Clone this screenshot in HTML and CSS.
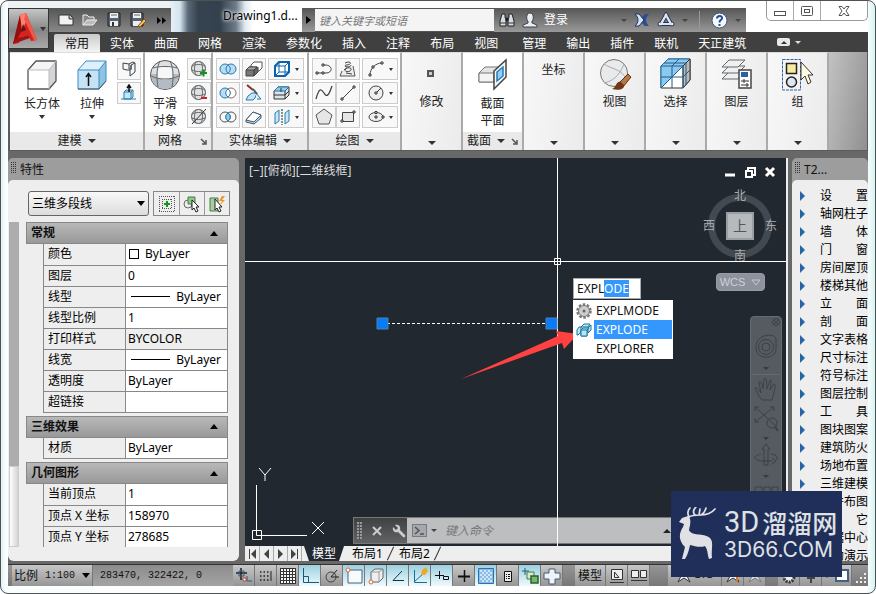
FILE: index.html
```
<!DOCTYPE html>
<html lang="zh-CN">
<head>
<meta charset="utf-8">
<title>Drawing1.dwg</title>
<link rel="stylesheet" href="styles.css">
</head>
<body>
<div class="window">
  <header class="header">
    <button class="app-button" aria-label="应用程序菜单">
      <svg width="26" height="34" viewBox="0 0 26 34"><path d="M8 3 14 1 25 28 19 29 16 23 9 25 7 31 1 32Z" fill="#d9211d"/><path d="M8 3 10 18 4 29 1 32Z" fill="#8f1010"/><path d="M8 3 14 1 15 8 10 18Z" fill="#ff8173"/><path d="M11 12 14 18 9 20Z" fill="#5b1715"/><path d="M14 1 25 28 22 28 12 7Z" fill="#f05a4d"/><path d="M3 27 16 23 18 26 1 32Z" fill="#a31313"/></svg>
      <i class="tri"></i>
    </button>
    <div class="titlebar">
      <div class="quick">
        <button aria-label="新建"><svg width="18" height="16" viewBox="0 0 18 16"><path d="M2 3H13L16 6V13H2Z" fill="#f2f2f2" stroke="#333"/><path d="M12 3V7H16" fill="#aaa" stroke="#444"/></svg></button>
        <button aria-label="打开"><svg width="18" height="16" viewBox="0 0 18 16"><path d="M2 13V3H6L8 5H13V8" fill="#888" stroke="#eee"/><path d="M2 13 6 8H16L12 13Z" fill="#bbb" stroke="#eee"/></svg></button>
        <button aria-label="保存"><svg width="18" height="16" viewBox="0 0 18 16"><path d="M3 1H15V14H3Z" fill="#576273" stroke="#222"/><path d="M5 1H13V6H5Z" fill="#eee"/><path d="M6 3H12" stroke="#666"/><path d="M5 9H13V14H5Z" fill="#eee"/><path d="M7 10H9V14H7Z" fill="#333"/></svg></button>
        <button aria-label="另存为"><svg width="18" height="16" viewBox="0 0 18 16"><path d="M2 1H14V14H2Z" fill="#576273" stroke="#222"/><path d="M4 1H12V6H4ZM4 9H12V14H4Z" fill="#eee"/><path d="M5 3H11" stroke="#666"/><path d="M9 14 15 7 17 9 11 15Z" fill="#ffc64a" stroke="#8b4c17"/></svg></button>
        <button class="more" aria-label="更多"><svg width="9" height="7" viewBox="0 0 9 7"><path d="M0 0 4 3.500 0 7ZM5 0 9 3.500 5 7Z"/></svg></button>
      </div>
      <h1 class="doc-title">Drawing1.d...</h1>
      <button class="search-toggle" aria-label="展开"><svg width="5" height="8" viewBox="0 0 5 8"><path d="M0 0 5 4 0 8Z"/></svg></button>
      <input class="search" type="search" aria-label="搜索" placeholder="键入关键字或短语">
      <div class="info">
        <button aria-label="查找"><svg width="16" height="16" viewBox="0 0 16 16"><path d="M3 2H6V5L7 8V14H1V9ZM10 2H13L15 9V14H9V8L10 5Z" fill="#d6dce5" stroke="#222"/><path d="M7 6H9V9H7ZM1 11H7M9 11H15" stroke="#333"/></svg></button>
        <button class="login"><svg width="16" height="16" viewBox="0 0 16 16"><path d="M8 1C4 1 4 8 6 9V11L1 13V15H15V13L10 11V9C12 8 12 1 8 1Z" fill="#e8edf3" stroke="#39424d"/></svg>登录</button>
        <i class="tri dim push"></i>
        <button aria-label="交换"><svg width="16" height="14" viewBox="0 0 16 14"><path d="M1 1H5L8 4 11 1H15C11 5 11 9 15 13H11L8 10 5 13H1C5 9 5 5 1 1Z" fill="#2d4d91"/><path d="M1 1H5L10 7 5 13H1C5 9 5 5 1 1Z" fill="#d7e3f4" stroke="#20355e"/></svg></button>
        <button aria-label="网络"><svg width="18" height="16" viewBox="0 0 18 16"><path d="M9 3 4 12H14Z" fill="none" stroke="#26334d" stroke-width="4"/><path d="M9 3 4 12H14Z" fill="none" stroke="#dce5f5" stroke-width="2"/><g fill="#eef3fb" stroke="#26334d"><circle cx="9" cy="3" r="2"/><circle cx="3" cy="12" r="2"/><circle cx="15" cy="12" r="2"/></g><path d="M9 3 4 12H14Z" fill="none" stroke="#dce5f5" stroke-width="2"/></svg></button>
        <i class="tri dim"></i><i class="rule"></i>
        <button aria-label="帮助"><svg width="17" height="17" viewBox="0 0 17 17"><circle cx="8.500" cy="8.500" r="7.500" fill="#f5f8fd" stroke="#3c5478"/><path d="M6 6.500C6 3 11.500 3 11 6.500C10.500 8 8.500 8 8.500 10.500M8.500 12V14" fill="none" stroke="#264c96" stroke-width="2"/></svg></button>
        <i class="tri dim"></i>
      </div>
      <div class="window-buttons">
        <button aria-label="最小化"><svg width="14" height="12" viewBox="0 0 14 12"><rect x="1.500" y="6.500" width="11" height="4" fill="#fff" stroke="#555"/></svg></button>
        <button aria-label="还原"><svg width="14" height="12" viewBox="0 0 14 12"><rect x="1.500" y="1.500" width="11" height="9" rx="1" fill="#fff" stroke="#555"/><rect x="4.500" y="4.500" width="5" height="3" fill="#fff" stroke="#555"/></svg></button>
        <button class="close" aria-label="关闭"><svg width="14" height="12" viewBox="0 0 14 12"><path d="M2 1.500H5L7 4 9 1.500H12L9 6 12 10.500H9L7 8 5 10.500H2L5 6Z" fill="#fff" stroke="#555"/></svg></button>
      </div>
    </div>
    <nav class="tabs">
      <a class="active" href="#">常用</a><a href="#">实体</a><a href="#">曲面</a><a href="#">网格</a><a href="#">渲染</a><a href="#">参数化</a><a href="#">插入</a><a href="#">注释</a><a href="#">布局</a><a href="#">视图</a><a class="wide" href="#">管理</a><a href="#">输出</a><a href="#">插件</a><a href="#">联机</a><a href="#">天正建筑</a>
      <button class="ribbon-toggle" aria-label="最小化功能区"><span><i></i></span><b></b></button>
    </nav>
  </header>

  <section class="ribbon">
    <div class="panel modeling">
      <div class="tools">
        <button class="big"><svg width="34" height="34" viewBox="0 0 34 34"><path d="M3 12 11 3H31L24 12Z" fill="#f5f5f6"/><path d="M3 12H24V31H3Z" fill="#fff"/><path d="M24 12 31 3V23L24 31Z" fill="#d2d4d7"/><path d="M3 12 11 3H31V23L24 31H3Z" fill="none" stroke="#555" stroke-width="1.300" stroke-linejoin="round"/><path d="M3 12H24V31M24 12 31 3" fill="none" stroke="#bbb"/></svg>长方体<i class="tri"></i></button>
        <button class="big"><svg width="34" height="34" viewBox="0 0 34 34"><path d="M3 12 11 3H31L24 12Z" fill="#ddf0fb"/><path d="M3 12H24V31H3Z" fill="#c5e3f4"/><path d="M24 12 31 3V23L24 31Z" fill="#8fc3e3"/><path d="M3 12 11 3H31V23L24 31H3ZM3 12H24V31M24 12 31 3" fill="none" stroke="#3b8dc0"/><path d="M3 31H24L31 23" fill="none" stroke="#555"/><path d="M13.500 28V16M11 19 13.500 15.500 16 19" fill="none" stroke="#111" stroke-width="1.500"/></svg>拉伸<i class="tri"></i></button>
        <div class="stack">
          <button aria-label="多段体"><svg width="18" height="18" viewBox="0 0 18 18"><path d="M3 3 9 4V9H11V5L15 3V12L10 16V10H7L3 9Z" fill="#f4f6f8" stroke="#3d4249"/><path d="M9 4 13 2 15 3M11 5V10" fill="none" stroke="#3d4249"/></svg></button>
          <button aria-label="按住并拖动"><svg width="18" height="18" viewBox="0 0 18 18"><path d="M4 8 6 6H13V13L11 15H4Z" fill="#c7e6f7" stroke="#287eae"/><path d="M1 15H16M11 8V15M4 8H11L13 6" fill="none" stroke="#287eae"/><path d="M9 8V2M7 4 9 1 11 4" fill="none" stroke="#111" stroke-width="1.500"/></svg></button>
        </div>
      </div>
      <button class="caption">建模 <i class="tri"></i></button>
    </div>
    <div class="panel mesh">
      <div class="tools">
        <button class="big"><svg width="34" height="34" viewBox="0 0 34 34"><circle cx="17" cy="17" r="14.500" fill="#dde1e6" stroke="#555"/><path d="M3 16H31C30 27 23 31 17 31 9 31 3 25 3 16Z" fill="#b4bbc4"/><path d="M11 9H23L25 20 17 22 9 20Z" fill="#f7f7f7"/><path d="M12 3C9 9 8 17 10 29M22 3C25 9 26 17 24 29M5 10C11 8 23 8 29 10M3 18C11 22 23 22 31 18" fill="none" stroke="#666"/></svg>平滑<br>对象</button>
        <div class="stack">
          <button aria-label="提高平滑度"><svg width="18" height="18" viewBox="0 0 18 18"><use href="#sphere"/><path d="M10 13H17M13.500 9.500V16.500" stroke="#14931b" stroke-width="2"/></svg></button>
          <button aria-label="降低平滑度"><svg width="18" height="18" viewBox="0 0 18 18"><use href="#sphere"/><path d="M11 14H17" stroke="#d21e26" stroke-width="2"/></svg></button>
          <button aria-label="锐化"><svg width="18" height="18" viewBox="0 0 18 18"><use href="#sphere"/><path d="M2 16 16 1" stroke="#333"/></svg></button>
        </div>
      </div>
      <div class="caption">网格<svg class="launch" width="7" height="7" viewBox="0 0 7 7"><path d="M1 1 5 5M6 2V6H2" fill="none" stroke="#555" stroke-width="1.500"/></svg></div>
    </div>
    <div class="panel solids">
      <div class="tools">
        <div class="stack">
          <button aria-label="并集"><svg width="18" height="18" viewBox="0 0 18 18"><use href="#rings" fill="#b9ddf4" stroke="#2479ae"/></svg></button>
          <button aria-label="差集"><svg width="18" height="18" viewBox="0 0 18 18"><circle cx="12" cy="9" r="5" fill="#fff" stroke="#9a6c5a"/><circle cx="6" cy="9" r="5" fill="#b9ddf4" stroke="#2479ae"/><path d="M9 5C6 7 6 11 9 13C12 11 12 7 9 5Z" fill="#fff" stroke="#2479ae"/></svg></button>
          <button aria-label="交集"><svg width="18" height="18" viewBox="0 0 18 18"><use href="#rings" fill="none" stroke="#555"/><path d="M9 5C6 7 6 11 9 13C12 11 12 7 9 5Z" fill="#8dc8ed" stroke="#2479ae"/></svg></button>
        </div>
        <div class="stack">
          <button aria-label="干涉"><svg width="18" height="18" viewBox="0 0 18 18"><path d="M6 5 9 2H17V8L14 11H6Z" fill="#fff" stroke="#555"/><path d="M1 10 4 7H12L9 10V16H1Z" fill="#777" stroke="#444"/><path d="M1 10H9L12 7H4Z" fill="#aaa" stroke="#444"/><path d="M9 16 13 12V7L9 10Z" fill="#666" stroke="#444"/></svg></button>
          <button aria-label="剖切"><svg width="18" height="18" viewBox="0 0 18 18"><path d="M3 12 7 9H12L10 14 8 16H1Z" fill="#c5e4f6" stroke="#2479ae"/><path d="M10 8 16 15H12" fill="#e0eff8" stroke="#2479ae"/><path d="M2 1 8 6" stroke="#8c3129" stroke-width="2"/><path d="M8 5 12 10" stroke="#555" stroke-width="2"/></svg></button>
          <button aria-label="加厚"><svg width="18" height="18" viewBox="0 0 18 18"><path d="M1 12 8 4 16 7V10L9 16 1 14Z" fill="#b9ddf4" stroke="#456"/><path d="M1 12 9 14 16 7 8 4Z" fill="#fff" stroke="#456"/></svg></button>
        </div>
        <div class="stack split">
          <button aria-label="提取边"><svg width="18" height="18" viewBox="0 0 18 18"><path d="M2 6 6 2H16V12L12 16H2Z" fill="#fff" stroke="#0862ad" stroke-width="2"/><path d="M2 6H12V16M12 6 16 2M6 2V12H16M6 12 2 16" fill="none" stroke="#0862ad"/></svg><i class="tri"></i></button>
          <button aria-label="拉伸面"><svg width="18" height="18" viewBox="0 0 18 18"><path d="M1 7 5 3H16V11L12 15H1Z" fill="#d9e4eb" stroke="#333"/><path d="M1 7 5 3H16L12 7Z" fill="#93cdec" stroke="#2479ae"/><path d="M12 7V15M1 11H12L16 7M8 8V4" fill="none" stroke="#333"/></svg><i class="tri"></i></button>
          <button aria-label="分割"><svg width="18" height="18" viewBox="0 0 18 18"><path d="M2 5 6 2V13L2 16ZM12 5 16 2V13L12 16Z" fill="#c7e7f8" stroke="#287eae"/><path d="M9 1V17" stroke="#222" stroke-dasharray="2 1"/></svg><i class="tri"></i></button>
        </div>
      </div>
      <button class="caption">实体编辑 <i class="tri"></i></button>
    </div>
    <div class="panel draw">
      <div class="tools">
        <div class="pairs">
          <button aria-label="多段线"><svg width="18" height="18" viewBox="0 0 18 18"><path d="M3 13H11C18 13 18 5 10 5H8" fill="none" stroke="#444"/><g fill="#fff" stroke="#333"><path d="M1 12H3V14H1ZM7 12H9V14H7ZM7 4H9V6H7Z"/></g></svg></button>
          <button aria-label="螺旋"><svg width="18" height="18" viewBox="0 0 18 18"><path d="M3 11 1 16H16L14 6" fill="#eee" stroke="#555"/><path d="M6 3C12 0 14 5 7 5 3 7 12 8 12 5M5 10C8 6 15 8 11 11 7 13 4 10 8 8M7 13 13 14" fill="none" stroke="#444"/></svg></button>
          <button aria-label="样条曲线"><svg width="18" height="18" viewBox="0 0 18 18"><path d="M1 15C4 4 6 4 9 9S14 11 17 2" fill="none" stroke="#444" stroke-width="1.300"/></svg></button>
          <button aria-label="直线"><svg width="18" height="18" viewBox="0 0 18 18"><path d="M3 15 15 3" stroke="#444"/><path d="M2 14H4V16H2ZM14 2H16V4H14Z" fill="#fff" stroke="#333"/></svg></button>
          <button aria-label="多边形"><svg width="18" height="18" viewBox="0 0 18 18"><path d="M9 1 17 7 14 16H4L1 7Z" fill="#e6e6e6" stroke="#555"/></svg></button>
          <button aria-label="矩形"><svg width="18" height="18" viewBox="0 0 18 18"><path d="M3.500 4.500H14.500V13.500H3.500Z" fill="#e6e6e6" stroke="#444"/><path d="M2 12H4V14H2ZM14 3H16V5H14Z" fill="#fff" stroke="#333"/></svg></button>
        </div>
        <div class="stack split">
          <button aria-label="圆弧"><svg width="18" height="18" viewBox="0 0 18 18"><path d="M3 15C3 9 8 3 15 3" fill="none" stroke="#444"/><path d="M2 14H4V16H2ZM5 6H7V8H5ZM14 2H16V4H14Z" fill="#fff" stroke="#333"/></svg><i class="tri"></i></button>
          <button aria-label="圆"><svg width="18" height="18" viewBox="0 0 18 18"><circle cx="9" cy="9" r="7" fill="#eee" stroke="#444"/><path d="M9 9 14 4" stroke="#333"/><path d="M8 8H10V10H8Z" fill="#fff" stroke="#333"/></svg><i class="tri"></i></button>
          <button aria-label="椭圆"><svg width="18" height="18" viewBox="0 0 18 18"><ellipse cx="9" cy="9" rx="7" ry="4.500" fill="#eee" stroke="#444"/><path d="M7 9H11M9 7V11M15 8H17V10H15ZM8 3.500H10V5.500H8Z" fill="#fff" stroke="#333"/></svg><i class="tri"></i></button>
        </div>
      </div>
      <button class="caption">绘图 <i class="tri"></i></button>
    </div>
    <button class="panel folded"><svg width="34" height="34" viewBox="0 0 34 34"><path d="M13 14H18V19H13Z" fill="#ccc" stroke="#555" stroke-width="2"/></svg>修改<i class="tri"></i></button>
    <div class="panel section">
      <div class="tools">
        <button class="big"><svg width="34" height="34" viewBox="0 0 34 34"><path d="M3 15 9 9H23V19L18 24H3Z" fill="#e2e4e6" stroke="#777"/><path d="M3 15H18V24H3Z" fill="#f4f4f4" stroke="#777"/><path d="M18 13 30 2V19L18 31Z" fill="#f5f7f8" stroke="#444" stroke-width="1.500"/><path d="M21 14 27 9V18L21 23Z" fill="#96cef5" stroke="#247abb" stroke-width="1.500"/></svg>截面<br>平面</button>
      </div>
      <div class="caption">截面 <i class="tri"></i><svg class="launch" width="7" height="7" viewBox="0 0 7 7"><path d="M1 1 5 5M6 2V6H2" fill="none" stroke="#555" stroke-width="1.500"/></svg></div>
    </div>
    <button class="panel folded plain">坐标<i class="tri"></i></button>
    <button class="panel folded"><svg width="34" height="34" viewBox="0 0 34 34"><circle cx="16" cy="16" r="13.500" fill="#e9eaec" stroke="#777"/><path d="M6 7C13 12 24 12 28 22M26 7C21 20 14 24 6 26" fill="none" stroke="#aaa"/><path d="M20 27 30 17 33 20 25 30Z" fill="#b97840" stroke="#5a321b"/><path d="M23 25C18 23 19 30 14 32C21 34 27 32 26 28Z" fill="#713817"/></svg>视图<i class="tri"></i></button>
    <button class="panel folded"><svg width="34" height="34" viewBox="0 0 34 34"><path d="M2 9 9 2H31V23L24 31H2Z" fill="#fff" stroke="#333"/><path d="M2 9 9 2H31L24 9 2 31Z" fill="#8bc9f0" stroke="#1774b5"/><path d="M24 9 31 2V23L24 31Z" fill="#bbb" stroke="#333"/><path d="M2 9H24V31M2 20H24L31 13M13 9V31M13 9 20 2M5 6H27V28" fill="none" stroke="#265b80"/><path d="M2 31 24 9" stroke="#0b64aa"/></svg>选择<i class="tri"></i></button>
    <button class="panel folded"><svg width="34" height="34" viewBox="0 0 34 34"><g fill="#eef0f2" stroke="#666"><path d="M2 22 9 15H25L18 22Z"/><path d="M2 16 9 9H25L18 16Z"/><path d="M2 10 9 3H25L18 10Z"/></g><path d="M19 13H31V31H19Z" fill="#fff" stroke="#444" stroke-width="1.500"/><path d="M21 15H28V20H21Z" fill="#2b62a1"/><path d="M21 24H29M21 28H29M24 22V26M27 26V30" stroke="#333"/></svg>图层<i class="tri"></i></button>
    <button class="panel folded"><svg width="34" height="34" viewBox="0 0 34 34"><path d="M1.500 2.500H19.500V33H1.500Z" fill="none" stroke="#325fa8" stroke-dasharray="3 1"/><path d="M5.500 6.500H15.500V16.500H5.500Z" fill="#f6eb9e" stroke="#222" stroke-width="1.500"/><circle cx="10.500" cy="25" r="5" fill="#dce7ef" stroke="#222" stroke-width="1.500"/><path d="M20 5V23L24 19 27 27 30 25 27 18H32Z" fill="#fffbe0" stroke="#333"/></svg>组<i class="tri"></i></button>
    <div class="ribbon-rest"></div>
  </section>

  <main class="workspace">
    <aside class="palette properties">
      <h2 class="palette-title"><i class="grip"></i>特性</h2>
      <div class="palette-body">
        <div class="picker">
          <label class="combo"><select aria-label="对象类型"><option>三维多段线</option></select></label>
          <div class="pick-tools">
            <button aria-label="切换"><svg width="18" height="18" viewBox="0 0 18 18"><path d="M1.500 1V17M16.500 1V17M1 1.500H17M1 16.500H17M4.500 4V14M13.500 4V14M4 4.500H14M4 13.500H14" fill="none" stroke="#555" stroke-dasharray="1 1"/><path d="M6 9H12M9 6V12" stroke="#16951b" stroke-width="2"/></svg></button>
            <button aria-label="选择对象"><svg width="18" height="18" viewBox="0 0 18 18"><circle cx="5" cy="9" r="4" fill="none" stroke="#666"/><path d="M5 2H12V9H5Z" fill="#92c58c" stroke="#477e43"/><path d="M9 5V15L11 13 13 17 15 16 13 12H16Z" fill="#fff" stroke="#222"/></svg></button>
            <button aria-label="快速选择"><svg width="18" height="18" viewBox="0 0 18 18"><path d="M2 3H10V16H2Z" fill="#a6ce9f" stroke="#477e43"/><path d="M7 4V15L9 13 11 17 13 16 11 12H14Z" fill="#fff" stroke="#222"/><path d="M14 1 11 6H14L12 10 17 5H14L17 1Z" fill="#f29522"/></svg></button>
          </div>
        </div>
        <div class="prop-area">
          <div class="prop-scroll"><i></i></div>
          <div class="prop-groups">
            <section><button class="group">常规<i></i></button>
              <table>
                <tr><th>颜色</th><td><i class="swatch"></i>ByLayer</td></tr>
                <tr><th>图层</th><td>0</td></tr>
                <tr><th>线型</th><td><div class="line-value"><i></i>ByLayer</div></td></tr>
                <tr><th>线型比例</th><td>1</td></tr>
                <tr><th>打印样式</th><td class="locked">BYCOLOR</td></tr>
                <tr><th>线宽</th><td><div class="line-value"><i></i>ByLayer</div></td></tr>
                <tr><th>透明度</th><td>ByLayer</td></tr>
                <tr><th>超链接</th><td></td></tr>
              </table></section>
            <section><button class="group">三维效果<i></i></button>
              <table><tr><th>材质</th><td>ByLayer</td></tr></table></section>
            <section><button class="group">几何图形<i></i></button>
              <table>
                <tr><th>当前顶点</th><td>1</td></tr>
                <tr><th>顶点 X 坐标</th><td>158970</td></tr>
                <tr><th>顶点 Y 坐标</th><td>278685</td></tr>
                <tr><th></th><td></td></tr>
              </table></section>
          </div>
        </div>
      </div>
    </aside>

    <section class="drawing">
      <div class="canvas">
        <div class="view-label">[−][俯视][二维线框]</div>
        <div class="view-buttons">
          <button aria-label="最小化视口"><svg width="12" height="12" viewBox="0 0 12 12"><path d="M1 9H11" stroke="#fff" stroke-width="3"/></svg></button>
          <button aria-label="还原视口"><svg width="12" height="12" viewBox="0 0 12 12"><path d="M4 4V2H11V9H9M2 5H8V11H2Z" fill="none" stroke="#fff" stroke-width="2"/></svg></button>
          <button aria-label="关闭视口"><svg width="12" height="12" viewBox="0 0 12 12"><path d="M2 2 10 10M10 2 2 10" stroke="#fff" stroke-width="3"/></svg></button>
        </div>
        <div class="compass">
          <i class="ring"></i><span class="north">北</span><span class="west">西</span><button>上</button><span class="east">东</span><span class="south">南</span>
        </div>
        <button class="wcs">WCS<svg width="10" height="7" viewBox="0 0 10 7"><path d="M1 1H9L5 6Z" fill="none" stroke="#c2c6ce"/></svg></button>
        <div class="nav-bar">
          <svg width="30" height="185" viewBox="1 0 30 185" fill="none" stroke="#3c4146"><circle cx="26" cy="5" r="3.500"/><path d="M24 3 28 7M28 3 24 7"/><path d="M6 30C6 16 26 16 26 22V32C26 38 20 41 14 40C9 39 6 36 6 30Z"/><circle cx="16" cy="30" r="7.500"/><circle cx="16" cy="30" r="4"/><path d="M13 50H19L16 53Z" fill="#34393e" stroke="none"/><path d="M2 57.500H30" stroke="#656a6f"/><path d="M12 83C8 79 7 74 5 71C6 69 9 73 11 76L9 65C10 63 12 65 13 72L14 62C16 60 17 63 17 72L20 63C22 63 21 67 20 73L24 67C26 67 25 71 24 75L22 83Z"/><path d="M5 90 27 110M24 90 5 105M5 94V90H9M20 90H24V94M5 101V105H9"/><circle cx="22" cy="106" r="5"/><path d="M25 110 28 114" stroke-width="2"/><path d="M13 120H19L16 123Z" fill="#34393e" stroke="none"/><path d="M14 148V132H12L16 127 20 132H18V148ZM11 137C2 139 3 144 15 144H22M22 141 26 144 22 147M21 137C27 138 29 141 26 143"/><path d="M13 158H19L16 161Z" fill="#34393e" stroke="none"/><path d="M5 170H12V176H5ZM14 170H20V176H14ZM22 170H28V176H22Z"/></svg>
        </div>
        <div class="command">
          <div class="command-tools"><i class="command-grip"></i>
            <button aria-label="关闭命令行"><svg width="10" height="10" viewBox="0 0 10 10"><path d="M1 1 9 9M9 1 1 9" stroke="#ccc" stroke-width="2"/></svg></button>
            <button aria-label="自定义"><svg width="14" height="14" viewBox="0 0 14 14"><path d="M1 3 4 6 6 4 3 1C7 0 9 3 8 6L13 11C14 13 12 14 11 13L6 8C3 9 0 7 1 3Z" fill="#ccc"/></svg></button>
          </div>
          <svg class="prompt" width="15" height="13" viewBox="0 0 15 13"><rect x=".5" y=".5" width="14" height="12" fill="#a5a8ac" stroke="#777b80"/><path d="M3 3 7 6.500 3 10M8 10H12" fill="none" stroke="#50555b" stroke-width="1.500"/></svg>
          <i class="tri dim"></i>
          <input type="text" aria-label="命令行" placeholder="键入命令">
          <i class="up"></i>
        </div>
        <svg class="scene" width="544" height="389" viewBox="0 0 544 389">
          <g fill="none" stroke="#fff"><path d="M0 103.500H544M312.500 0V389M309.500 100.500H315.500V106.500H309.500Z"/><path d="M11.500 327V377.500H62M7.500 372.500H16.500V381.500H7.500Z"/><path d="M14 310 20 317 26 310M20 317V323M67 364 79 376M79 364 67 376"/><path d="M142 165.500H301" stroke-dasharray="3 2"/></g>
          <path d="M132 160H143V171H132ZM301 160H312V171H301Z" fill="#087cf7" stroke="#4a82b8"/>
          <path d="M216 221 313 178 311 173 333 176 319 191 317 185Z" fill="#ff4141"/>
        </svg>
        <div class="dynamic">
          <input id="dynamic-input" type="text" aria-label="动态输入" value="EXPLODE" size="7">
          <ul>
            <li><svg width="16" height="16" viewBox="0 0 16 16"><circle cx="8" cy="8" r="6.500" fill="none" stroke="#777" stroke-width="2.500" stroke-dasharray="2.500 1.580"/><circle cx="8" cy="8" r="5.500" fill="#ccc" stroke="#777"/><circle cx="8" cy="8" r="1.500" fill="#666"/></svg><span>EXPLMODE</span></li>
            <li class="chosen"><svg width="16" height="16" viewBox="0 0 16 16"><g fill="#b9e4fa" stroke="#15779e"><path d="M1 8 3 5H5V10L2 13H1ZM12 6 15 3V8L12 11ZM5 5 8 2H14L12 5Z"/><path d="M5 8 7 6H13L11 8V14H5Z"/><path d="M5 8H11V14H5Z"/></g></svg><span>EXPLODE</span></li>
            <li><i></i><span>EXPLORER</span></li>
          </ul>
        </div>
      </div>
      <div class="sheets">
        <div class="sheet-nav">
          <button aria-label="第一张"><svg width="9" height="10" viewBox="0 0 9 10"><path d="M1 0V10H2V0ZM8 0V10L3 5Z"/></svg></button>
          <button aria-label="上一张"><svg width="9" height="10" viewBox="0 0 9 10"><path d="M7 0V10L2 5Z"/></svg></button>
          <button aria-label="下一张"><svg width="9" height="10" viewBox="0 0 9 10"><path d="M2 0V10L7 5Z"/></svg></button>
          <button aria-label="最后一张"><svg width="9" height="10" viewBox="0 0 9 10"><path d="M7 0V10H8V0ZM1 0V10L6 5Z"/></svg></button>
        </div>
        <button class="sheet current">模型</button><button class="sheet">布局1</button><button class="sheet">布局2</button>
      </div>
    </section>

    <aside class="palette side">
      <h2 class="palette-title"><i class="grip"></i>T2...</h2>
      <ul class="palette-body menu">
        <li>设　　置</li><li>轴网柱子</li><li>墙　　体</li><li>门　　窗</li><li>房间屋顶</li><li>楼梯其他</li><li>立　　面</li><li>剖　　面</li><li>文字表格</li><li>尺寸标注</li><li>符号标注</li><li>图层控制</li><li>工　　具</li><li>图块图案</li><li>建筑防火</li><li>场地布置</li><li>三维建模</li><li>文件布图</li><li>其　　它</li><li>数据中心</li><li>帮助演示</li>
      </ul>
    </aside>
  </main>

  <footer class="status">
    <button class="scale">比例 <span>1:100</span><i class="tri"></i></button>
    <output class="coords">283470, 322422, 0</output>
    <div class="toggles">
      <button aria-label="推断约束"><svg width="18" height="18" viewBox="0 0 18 18"><path d="M1 6H12M6 1V13" stroke="#222" stroke-width="1.500"/><path d="M4 4H9V9H4ZM12 9V14H17" fill="none" stroke="#36597e"/><path d="M8 11H11V14H8Z" fill="#fff" stroke="#b3472c"/></svg></button>
      <button aria-label="捕捉"><svg width="18" height="18" viewBox="0 0 18 18"><path d="M3 5H13M3 9H13M3 13H13" stroke="#222" stroke-width="1.500" stroke-dasharray="1.500 2"/><path d="M14 4V14" stroke="#222"/></svg></button>
      <button aria-label="栅格"><svg width="18" height="18" viewBox="0 0 18 18"><path d="M1 1H17V17H1Z" fill="#f8f8f8"/><path d="M1.500 1V17M4.500 1V17M7.500 1V17M10.500 1V17M13.500 1V17M16.500 1V17M1 1.500H17M1 4.500H17M1 7.500H17M1 10.500H17M1 13.500H17M1 16.500H17" stroke="#333"/></svg></button>
      <button class="on" aria-label="正交"><svg width="18" height="18" viewBox="0 0 18 18"><path d="M2.500 1V15.500H18" fill="none" stroke="#175b76"/><path d="M2.500 9.500H7.500V15" fill="none" stroke="#175b76"/></svg></button>
      <button aria-label="极轴"><svg width="18" height="18" viewBox="0 0 18 18"><circle cx="8" cy="10" r="5" fill="none" stroke="#444"/><path d="M14 3 8 10H16" fill="none" stroke="#222"/></svg></button>
      <button class="on" aria-label="对象捕捉"><svg width="18" height="18" viewBox="0 0 18 18"><path d="M3 3H17V16H3Z" fill="#f7fbfd" stroke="#456577"/><circle cx="3" cy="3" r="2" fill="#fff" stroke="#d46b30"/></svg></button>
      <button class="on" aria-label="三维对象捕捉"><svg width="18" height="18" viewBox="0 0 18 18"><path d="M4 5 8 2H16V11L12 15H4Z" fill="#eee" stroke="#666"/><path d="M4 5H12V15M12 5 16 2" fill="none" stroke="#999"/><circle cx="4" cy="15" r="2" fill="#fff" stroke="#d46b30"/></svg></button>
      <button class="on" aria-label="对象追踪"><svg width="18" height="18" viewBox="0 0 18 18"><path d="M13 4 4 13.500H15" fill="none" stroke="#123542"/></svg></button>
      <button class="on" aria-label="动态UCS"><svg width="18" height="18" viewBox="0 0 18 18"><path d="M3.500 3V15.500H16M3 15 13 6" fill="none" stroke="#176b9b"/><path d="M11 3 15 0 17 4 14 8H10Z" fill="#eda828"/></svg></button>
      <button class="on" aria-label="动态输入"><svg width="18" height="18" viewBox="0 0 18 18"><path d="M2 8.500H11M6.500 4V12M10.500 9.500H15.500V12.500H10.500Z" fill="none" stroke="#111"/></svg></button>
      <button aria-label="线宽"><svg width="18" height="18" viewBox="0 0 18 18"><path d="M3 9.500H15" stroke="#111" stroke-width="2"/><path d="M9.500 3V15" stroke="#111" stroke-width="1.500"/></svg></button>
      <button class="on" aria-label="透明度"><svg width="18" height="18" viewBox="0 0 18 18"><path d="M1.500 1.500H16.500V16.500H1.500Z" fill="#8bbce9" stroke="#2a72ae"/><path d="M3 4H15M3 8H15M3 12H15" stroke="#cfe5fa" stroke-width="2" stroke-dasharray="2 2"/><path d="M5 6H15M5 10H15M5 14H15" stroke="#cfe5fa" stroke-width="2" stroke-dasharray="2 2"/></svg></button>
      <button aria-label="快捷特性"><svg width="18" height="18" viewBox="0 0 18 18"><path d="M5.500 4.500H12.500V14.500H5.500Z" fill="#eee" stroke="#111"/><path d="M7 7.500H8M9 7.500H11M7 9.500H8M9 9.500H11M7 11.500H8M9 11.500H11" stroke="#111"/></svg></button>
      <button class="on" aria-label="选择循环"><svg width="18" height="18" viewBox="0 0 18 18"><path d="M1 4H8M4 1V8" stroke="#225d82"/><path d="M6 5H13V12H6Z" fill="#d5ecd2" stroke="#467b43"/><path d="M10 9H17V16H10Z" fill="#76b86f" stroke="#2b6329" stroke-width="1.500"/></svg></button>
      <button aria-label="注释监视器"><svg width="18" height="18" viewBox="0 0 18 18"><path d="M6 2H12V6H17V12H12V17H6V12H1V6H6Z" fill="#edf3fa" stroke="#4a5b70"/></svg></button>
    </div>
    <i class="gap"></i>
    <div class="spaces">
      <button class="model">模型</button>
      <button aria-label="布局"><svg width="18" height="16" viewBox="0 0 18 16"><path d="M3.500 1.500H14.500V11.500H3.500ZM2 14.500H16" fill="#eee" stroke="#333"/><path d="M6.500 4V9.500H11Z" fill="none" stroke="#333"/></svg></button>
      <button aria-label="快速查看"><svg width="18" height="16" viewBox="0 0 18 16"><path d="M1.500 2.500H8.500V9.500H1.500ZM10.500 2.500H16.500V9.500H10.500ZM1 12.500H17" fill="#eee" stroke="#333"/></svg></button>
    </div>
    <i class="gap wide"></i>
    <button class="annotation"><svg width="16" height="18" viewBox="0 0 16 18"><path d="M2 15 8 3 14 15 8 11Z" fill="#eef5ff" stroke="#333"/></svg><span>1:1</span></button>
    <button aria-label="注释可见性"><svg width="16" height="18" viewBox="0 0 16 18"><path d="M2 15 8 3 14 15 8 11Z" fill="#eef5ff" stroke="#333"/><path d="M12 9V15" stroke="#dc7924" stroke-width="2"/></svg></button>
    <button aria-label="自动缩放"><svg width="16" height="18" viewBox="0 0 16 18"><path d="M2 15 8 3 14 15 8 11Z" fill="#ddd" stroke="#777"/></svg></button>
    <i class="gap"></i>
    <button aria-label="工作空间"><svg width="16" height="18" viewBox="0 0 16 18"><circle cx="8" cy="10" r="5" fill="#eee" stroke="#333" stroke-width="3" stroke-dasharray="2 1"/></svg></button>
    <button aria-label="锁定"><svg width="16" height="18" viewBox="0 0 16 18"><path d="M5 3H11V11H5ZM8 11V16" fill="#eee" stroke="#444" stroke-width="2"/></svg></button>
    <button class="menu-button" aria-label="状态栏菜单"><i class="tri"></i></button>
    <button class="full" aria-label="全屏显示"><svg width="16" height="16" viewBox="0 0 16 16"><path d="M2 2H14V13H2Z" fill="#fff" stroke="#456080" stroke-width="2"/></svg></button>
    <svg class="resize" width="14" height="14" viewBox="0 0 14 14"><path d="M10 2H12V4H10ZM6 6H8V8H6ZM10 6H12V8H10ZM2 10H4V12H2ZM6 10H8V12H6ZM10 10H12V12H10Z" fill="#eee"/></svg>
  </footer>
</div>

<div class="brand">
  <svg width="42" height="54" viewBox="0 0 42 54"><path d="M2 15 5 11 11 9C15 12 13 18 12 23C15 30 26 25 33 31C37 35 34 42 35 51L32 52C30 46 31 43 28 39C24 41 17 39 13 38C12 43 11 47 8 52H5L8 40C1 33 2 26 6 20L7 17Z" fill="#dfe1e4"/><path d="M12 10C15 8 19 8 23 8C29 8 34 7 38 2M24 8C28 6 28 4 29 1M18 8C15 5 17 2 19 0M12 10C10 6 11 3 13 1M22 8 23 2" fill="none" stroke="#dfe1e4" stroke-width="1.700" stroke-linecap="round"/></svg>
  <div><div class="brand-name"><b>3D</b>溜溜网</div><div class="brand-site">3D66.COM</div></div>
</div>

<svg class="defs" width="0" height="0" aria-hidden="true"><defs>
  <g id="sphere"><circle cx="8.500" cy="8.500" r="7" fill="#dfe2e5" stroke="#555"/><path d="M6 2C4 6 4 11 6 15M11 2C13 6 13 11 11 15M2 6C6 4 11 4 15 6M2 10C6 12 11 12 15 10" fill="none" stroke="#666"/></g>
  <g id="rings"><circle cx="6" cy="9" r="5"/><circle cx="12" cy="9" r="5"/><path d="M9 5C12 7 12 11 9 13" fill="none"/></g>
</defs></svg>
<script src="main.js"></script>
</body>
</html>
```
FILE: styles.css
```
* { box-sizing: border-box; }
body { margin: 0; background: #fff; color: #111; font: 12px/16px "Noto Sans", "Noto Sans CJK SC", sans-serif; }
button { margin: 0; padding: 0; border: 0; background: none; color: inherit; font: inherit; display: flex; align-items: center; justify-content: center; white-space: nowrap; }
input, select { font: inherit; }
svg { display: block; flex: none; }
ul { margin: 0; padding: 0; list-style: none; }
.tri { flex: none; width: 0; height: 0; border: 3px solid transparent; border-top: 4px solid #333; border-bottom: 0; }
.tri.dim { border-top: 3px solid #444; }
.defs { position: absolute; }

.window { height: 100vh; display: flex; flex-direction: column; padding: 0 7px 7px; border: 1px solid #4d5255; border-radius: 8px; overflow: hidden;
  background: linear-gradient(90deg, #e4f1f5, #fbfefe 5px, #fff 50%, #fff 99%, #d7f3f2); }

.header { display: grid; grid-template-columns: 41px 1fr; grid-template-rows: 31px 20px;
  background: linear-gradient(90deg, #eef3f6 160px, #d3e4ef 172px, #5b6978 180px, #36434f 190px, #33404e 212px, #6e7b88 228px, #dfe9f0 237px, #fff 245px); }
.app-button { grid-area: 1 / 1 / 3 / 2; z-index: 1; height: 41px; margin-top: 7px; gap: 2px; border: 1px solid #333; background: linear-gradient(#c5c5c5, #858585 55%, #aaa); }
.titlebar { grid-area: 1 / 2; display: flex; align-items: flex-end; min-width: 0; }
.quick { width: 122px; height: 24px; display: flex; align-items: center; gap: 6px; padding-left: 8px; background: linear-gradient(#555, #888); }
.quick .more { margin-left: 4px; }
.doc-title { flex: 1; height: 24px; margin: 0; padding-left: 52px; font-size: 12px; line-height: 16px; font-weight: 400; white-space: nowrap; color: #000; text-shadow: 0 0 3px #fff, 0 0 5px #fff; }
.search-toggle { width: 13px; height: 24px; background: linear-gradient(#555, #999); }
.search { width: 179px; height: 24px; padding: 0 4px; border: 1px solid #555; border-width: 1px 0; border-radius: 0; background: #f4f4f4; font-size: 11px; outline: 0; }
.search::placeholder { color: #777; font-style: italic; opacity: 1; }
.info { width: 252px; height: 24px; display: flex; align-items: center; gap: 7px; padding: 0 5px; background: linear-gradient(#565656, #999); color: #fff; }
.login { gap: 6px; }
.push { margin-left: auto; }
.rule { width: 1px; height: 18px; margin: 0 4px; background: #999; }
.window-buttons { align-self: flex-start; display: flex; height: 20px; margin-left: 20px; border: 1px solid #999; border-top: 0; border-radius: 0 0 5px 5px; background: #fff; }
.window-buttons button { width: 27px; border-right: 1px solid #aaa; }
.window-buttons .close { width: 46px; border: 0; }
.tabs { grid-area: 2 / 1 / 3 / 3; display: flex; padding: 0 0 0 46px; background: #404040; }
.tabs a { padding: 4px 10px 0; color: #fff; line-height: 16px; text-decoration: none; white-space: nowrap; }
.tabs .active { margin-top: 2px; padding: 2px 11px 0; background: linear-gradient(#c9c9c9, #f4f4f4); color: #111; border-radius: 2px 2px 0 0; }
.tabs .wide { margin-left: 4px; }
.ribbon-toggle { margin-left: 21px; gap: 5px; }
.ribbon-toggle span { width: 13px; height: 8px; border-radius: 2px; background: #e8e8e8; display: flex; align-items: center; justify-content: center; }
.ribbon-toggle i { border: 3px solid transparent; border-bottom-color: #333; border-top: 0; }
.ribbon-toggle b { border: 3px solid transparent; border-top-color: #ddd; border-bottom: 0; }

.ribbon { flex: none; display: flex; height: 99px; border: solid #5c5c5c; border-width: 0 1px 1px 2px; background: #fff; color: #222; }
.panel { flex: none; display: flex; flex-direction: column; justify-content: flex-start; min-width: 61px; border-right: 2px solid #aaa; border-top: 1px solid #ddd; background: #fff; }
.modeling { width: 135px; }
.mesh { width: 68px; }
.solids { width: 96px; }
.draw { width: 93px; }
.tools { flex: 1; display: flex; justify-content: center; gap: 2px; padding-top: 5px; }
.modeling .tools { justify-content: flex-end; padding-right: 2px; gap: 0; }
.big { flex-direction: column; justify-content: flex-start; width: 50px; line-height: 17px; }
.big svg { margin-bottom: 3px; }
.big .tri { margin-top: 3px; }
.mesh .big { width: 40px; }
.stack { display: flex; flex-direction: column; gap: 2px; }
.stack button, .pairs button { width: 24px; height: 22px; border: 1px solid #ccc; background: #f8f8f9; }
.stack.split button { width: 36px; gap: 4px; }
.split .tri { border-width: 3px 2px 0; }
.pairs { display: grid; grid-template-columns: 24px 24px; grid-auto-rows: 22px; gap: 2px 0; }
.caption { flex: none; display: flex; align-items: center; justify-content: center; gap: 6px; width: 100%; height: 18px; background: #e9e9e9; line-height: 16px; white-space: nowrap; }
.mesh .caption { justify-content: flex-end; padding-right: 4px; gap: 18px; }
.folded { align-items: center; padding-top: 4px; background: linear-gradient(100deg, #f8f8f8, #ebebeb); }
.folded > svg { margin-bottom: 3px; }
.folded > .tri { margin-top: auto; margin-bottom: 5px; border-width: 4px 4px 0; }
.caption .tri { border-width: 4px 4px 0; }
.plain { padding-top: 9px; }
.ribbon-rest { flex: 1; background: linear-gradient(100deg, #c2c2c2, #909090); }

.workspace { flex: 1; min-height: 0; display: flex; padding: 7px 0 3px; background: #686868; }
.palette { display: flex; flex-direction: column; background: #9d9d9d; border-radius: 5px 5px 6px 6px; overflow: hidden; }
.palette-title { flex: none; display: flex; align-items: center; gap: 4px; height: 22px; margin: 0; padding: 2px 0 0 3px; font-size: 12px; font-weight: 400; }
.grip { width: 5px; height: 12px; margin-bottom: 4px; background: repeating-linear-gradient(90deg, transparent 0 1px, #9d9d9d 1px 2px), repeating-linear-gradient(#333 0 1px, transparent 1px 2px); }
.palette-body { flex: 1; min-height: 0; background: #eee; border-radius: 5px 5px 5px 0; overflow: hidden; }
.properties { width: 231px; margin-right: 6px; }
.properties .palette-body { display: flex; flex-direction: column; padding-bottom: 14px; }
.picker { display: flex; align-items: center; gap: 4px; padding: 11px 9px 6px 20px; }
.combo { position: relative; flex: 1; }
.combo select { display: block; width: 100%; height: 25px; padding: 0 3px; border: 1px solid #666; border-radius: 3px; background: linear-gradient(#f8f8f8, #ddd); appearance: none; color: #000; }
.combo::after { content: ""; position: absolute; right: 4px; top: 10px; border: 4px solid transparent; border-top: 5px solid #000; border-bottom: 0; }
.pick-tools { display: flex; border: 1px solid #888; }
.pick-tools button { width: 25px; height: 23px; }
.pick-tools button + button { border-left: 1px solid #999; }
.prop-area { flex: 1; min-height: 0; display: flex; gap: 7px; padding: 0 11px 0 1px; overflow: hidden; }
.prop-scroll { width: 10px; flex: none; background: #adadad; display: flex; flex-direction: column; justify-content: flex-end; }
.prop-scroll i { height: 25%; border: 1px solid #ccc; background: linear-gradient(90deg, #fff, #d3d3d3); }
.prop-groups { flex: 1; }
.prop-groups section { margin-bottom: 3px; }
.group { width: 100%; height: 22px; padding: 0 9px 0 4px; justify-content: space-between; border: 1px solid #888; background: linear-gradient(#b8b8b8, #999); font-weight: 700; }
.group i { border: 4px solid transparent; border-bottom: 5px solid #000; border-top: 0; }
table { width: 185px; margin-left: auto; border-collapse: collapse; table-layout: fixed; color: #000; }
th, td { height: 21px; padding: 0 2px; border: 1px solid #888; background: #fff; font-weight: 400; text-align: left; line-height: 16px; white-space: nowrap; }
tr:first-child th, tr:first-child td { border-top: 0; }
th { width: 82px; padding-left: 4px; background: #eee; }
td.locked { background: #eee; }
.swatch { display: inline-block; width: 10px; height: 10px; margin: 0 6px 0 1px; border: 1px solid #000; vertical-align: -1px; }
.line-value { display: flex; align-items: center; gap: 6px; padding: 0 4px 0 3px; }
.line-value i { flex: 1; height: 1px; background: #000; }

.drawing { flex: 1; min-width: 0; display: flex; flex-direction: column; margin-right: 4px; border-right: 2px solid #eee; }
.canvas { position: relative; flex: 1; min-height: 0; overflow: hidden; background: #212830; color: #ddd; }
.view-label { padding: 5px 4px; }
.view-buttons { position: absolute; top: 8px; right: 10px; display: flex; gap: 8px; }
.scene { position: absolute; left: 0; top: 0; pointer-events: none; }
.compass { position: absolute; top: 30px; right: 9px; width: 74px; height: 76px; display: grid; grid-template: 24px 28px 24px / 23px 28px 23px; place-items: center; color: #a9adb1; }
.compass .ring { position: absolute; left: 5px; top: 6px; width: 64px; height: 64px; border: 7px solid #424950; border-radius: 50%; }
.compass span { z-index: 1; }
.north { grid-area: 1 / 2; place-self: start center; }
.west { grid-area: 2 / 1; place-self: center start; }
.east { grid-area: 2 / 3; place-self: center end; }
.south { grid-area: 3 / 2; place-self: end center; }
.compass button { grid-area: 2 / 2; width: 28px; height: 28px; border: 2px solid #9b9fa2; background: #b6babd; color: #555; font-size: 14px; }
.wcs { position: absolute; top: 115px; right: 21px; width: 49px; height: 18px; gap: 6px; border: 1px solid #969ba5; border-radius: 4px; background: #8d929d; color: #ccd0d6; font: 11px/16px "Liberation Sans", sans-serif; }
.nav-bar { position: absolute; top: 158px; right: 4px; border-radius: 4px; border: 1px solid #666b70; background: #555b60; }
.command { position: absolute; left: 108px; right: 0; bottom: 2px; height: 27px; display: flex; align-items: center; gap: 4px; background: #bdbec0; border: 1px solid #777; }
.command-tools { align-self: stretch; width: 53px; display: flex; align-items: center; gap: 10px; padding-left: 3px; background: linear-gradient(#3f4042, #626365); }
.command-grip { width: 5px; height: 18px; background: repeating-linear-gradient(90deg, transparent 0 2px, #505153 2px 3px), repeating-linear-gradient(#999 0 2px, transparent 2px 3px); }
.command input { flex: 1; min-width: 0; padding: 0 4px; border: 0; outline: 0; background: none; }
.command input::placeholder { color: #777; font-style: italic; opacity: 1; }
.command .prompt { margin-left: 1px; }
.up { margin-right: 114px; border: 4px solid transparent; border-bottom-color: #222; border-top: 0; }
.dynamic { position: absolute; left: 328px; top: 120px; color: #111; }
.dynamic input { display: block; width: 68px; height: 21px; padding: 0 3px; border: 1px solid #aaa; outline: 0; background: #fff; color: #111; caret-color: transparent; }
.dynamic input::selection { background: #3397fd; color: #fff; }
.dynamic ul { width: 100px; margin-top: 1px; padding: 1px; background: #fff; }
.dynamic li { display: flex; align-items: center; height: 19px; padding-left: 2px; gap: 2px; }
.dynamic li i { width: 16px; }
.dynamic li span { flex: 1; padding-left: 2px; line-height: 19px; }
.dynamic .chosen span { background: #3397fd; color: #fff; }
.sheets { flex: none; display: flex; height: 15px; background: #eee; line-height: 15px; color: #000; }
.sheet-nav { display: flex; padding: 0 1px; }
.sheet-nav button { width: 14px; border-right: 1px solid #aaa; fill: #444; }
.sheet { position: relative; padding: 0 8px; }
.sheet::after { content: ""; position: absolute; right: 0; top: 0; width: 1px; height: 15px; background: #333; transform: rotate(25deg); }
.sheet.current { margin-left: 1px; background: #212830; color: #fff; clip-path: polygon(0 0, 100% 0, 35px 100%, 5px 100%); }

.side { width: 76px; }
.menu { padding: 7px 0; }
.menu li { display: flex; align-items: center; gap: 15px; padding-left: 8px; line-height: 18px; white-space: nowrap; color: #000; }
.menu li::before { content: ""; border: 5px solid transparent; border-left: 5px solid #2765a5; border-right: 0; }

.status { flex: none; display: flex; height: 22px; padding-left: 4px; border-top: 1px solid #333; background: linear-gradient(#969696, #777); }
.status > * { flex: none; }
.status > button, .spaces button, .toggles button { width: 22px; border-right: 1px solid #777; background: linear-gradient(#c7c7c7, #969696); }
.status .scale { width: 81px; gap: 7px; }
.status .scale .tri { border-width: 5px 4px 0; border-top-color: #000; }
.scale span, .annotation span, .coords { font-family: "Liberation Mono", monospace; font-size: 10px; }
.coords { width: 140px; padding-left: 7px; line-height: 22px; background: linear-gradient(#8c8c8c, #a4a4a4); white-space: nowrap; }
.toggles, .spaces { display: flex; }
.toggles .on { background: linear-gradient(#9bd0df, #effaff); }
.status .gap { width: 12px; }
.status .wide { width: 18px; }
.spaces .model { width: 31px; }
.status .annotation { width: 54px; gap: 2px; }
.status .menu-button { width: 10px; border-right: 0; }
.status .full { width: 20px; }
.status .resize { margin: 6px 0 0 auto; }

.brand { position: absolute; right: 34px; bottom: 17px; width: 171px; height: 86px; display: flex; align-items: center; gap: 5px; padding-left: 6px; background: #202f5a; color: #dfe1e4; white-space: nowrap; }
.brand-name { font: 500 25px/32px "Noto Sans CJK SC", sans-serif; display: flex; align-items: center; gap: 3px; }
.brand-name b { font: 400 29px/32px Roboto, sans-serif; }
.brand-site { font: 400 21px/24px Inter, sans-serif; }
```
FILE: main.js
```
const dynamicInput = document.getElementById("dynamic-input");
dynamicInput.focus();
dynamicInput.setSelectionRange(4, 7);
```
